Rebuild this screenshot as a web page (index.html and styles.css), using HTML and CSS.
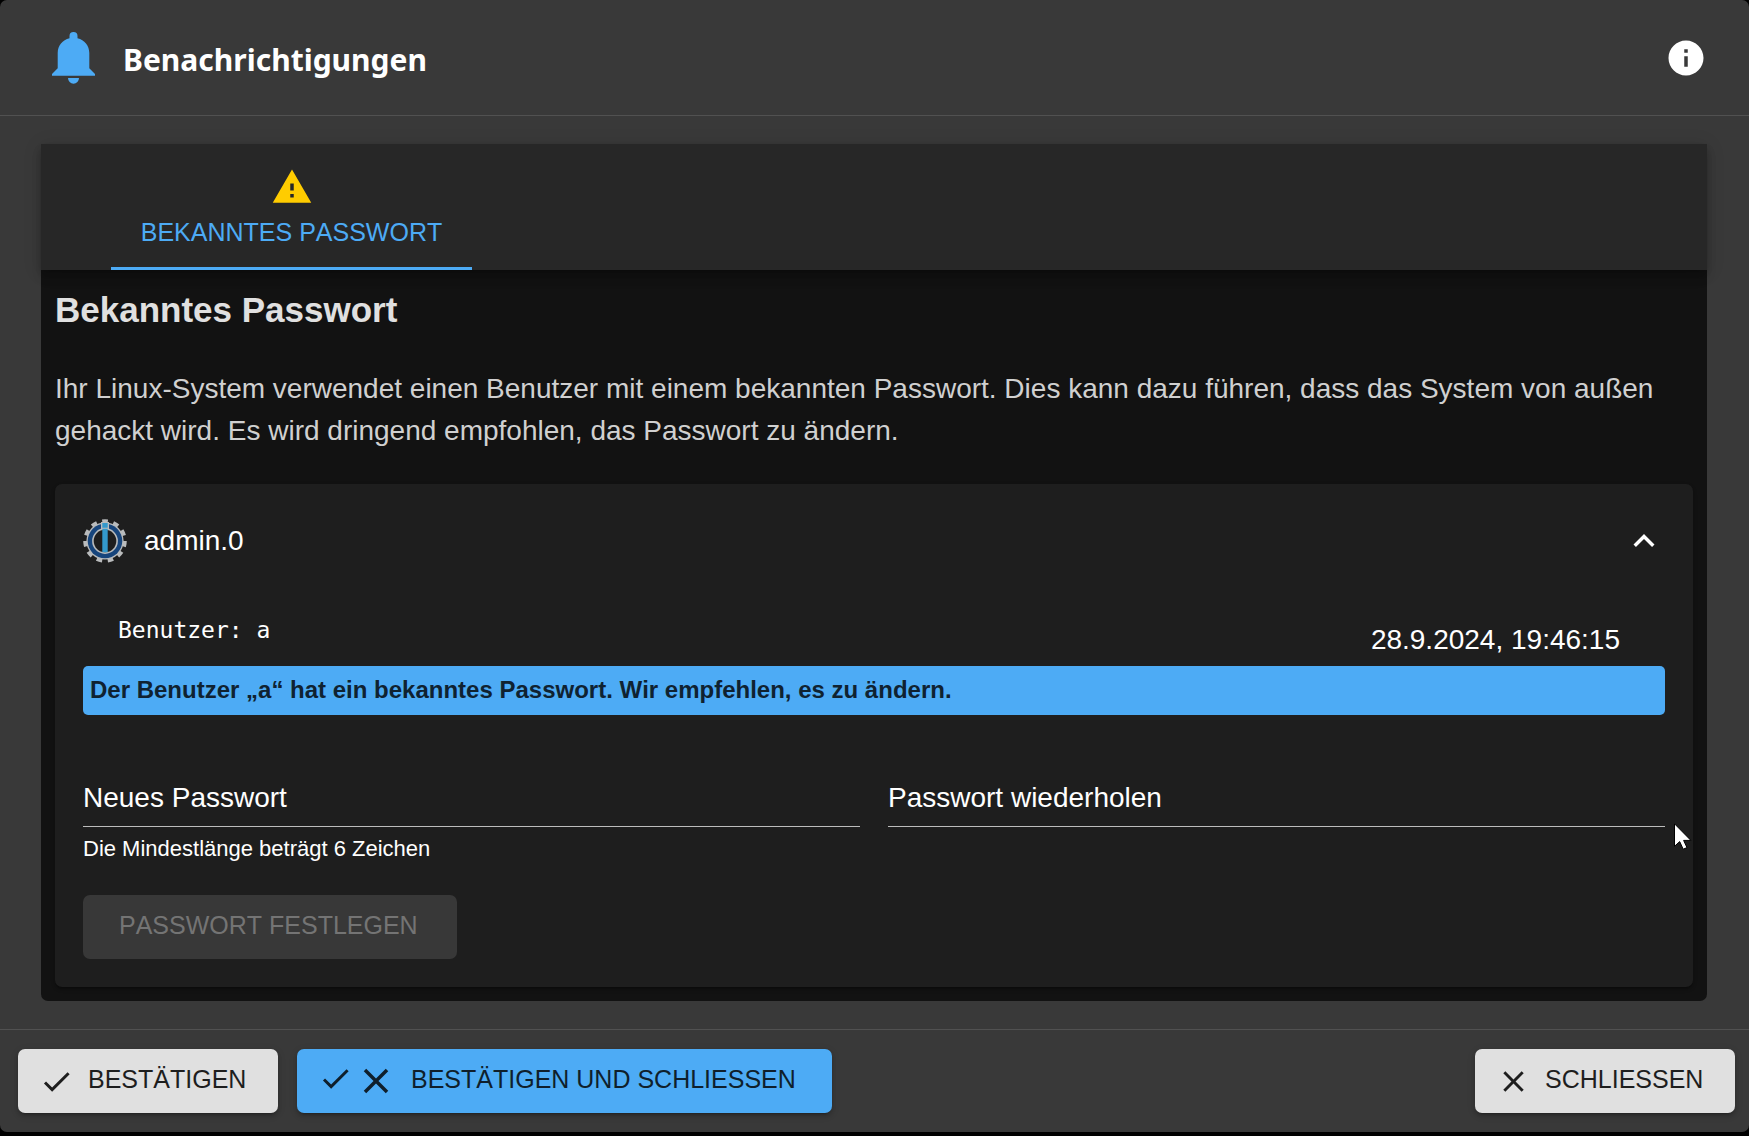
FILE: index.html
```html
<!DOCTYPE html>
<html lang="de">
<head>
<meta charset="utf-8">
<title>Benachrichtigungen</title>
<link rel="stylesheet" href="styles.css">
</head>
<body>
<div class="dialog" role="dialog" aria-labelledby="dialog-title">
  <header class="dialog-header">
    <svg class="bell" viewBox="0 0 43 52" aria-hidden="true"><path d="M21.5 0a4 4 0 0 0-4 4v2.300C10.500 8 5.700 13.500 5.700 21v15.300L0 42v1.700h43V42l-5.700-5.700V21c0-7.500-4.800-13-11.800-14.700V4a4 4 0 0 0-4-4zM16 46a5.500 5.700 0 0 0 11 0z"/></svg>
    <h1 class="dialog-title" id="dialog-title">Benachrichtigungen</h1>
    <button class="icon-button" type="button" aria-label="Information">
      <svg class="icon" viewBox="0 0 24 24"><path d="M12 2C6.480 2 2 6.480 2 12s4.480 10 10 10 10-4.480 10-10S17.520 2 12 2zm1 15h-2v-6h2v6zm0-8h-2V7h2v2z"/></svg>
    </button>
  </header>

  <main class="dialog-content">
    <section class="panel">
      <div class="tabs" role="tablist">
        <button class="tab" type="button" role="tab" aria-selected="true">
          <svg class="icon warning" viewBox="0 0 24 24" aria-hidden="true"><path d="M1 21h22L12 2 1 21zm12-3h-2v-2h2v2zm0-4h-2v-4h2v4z"/></svg>
          <span>BEKANNTES PASSWORT</span>
        </button>
      </div>
      <div class="panel-body">
        <h2 class="panel-title">Bekanntes Passwort</h2>
        <p class="description">Ihr Linux-System verwendet einen Benutzer mit einem bekannten Passwort. Dies kann dazu führen, dass das System von außen gehackt wird. Es wird dringend empfohlen, das Passwort zu ändern.</p>

        <article class="card">
          <button class="card-header" type="button" aria-expanded="true">
            <svg class="logo" viewBox="-22 -22 44 44" aria-hidden="true">
              <circle r="18.500" fill="none" stroke="#b9bbbc" stroke-width="6.500" stroke-dasharray="5 5" pathLength="110" transform="rotate(-98)"/>
              <circle r="18.600" fill="#b9bbbc"/>
              <circle r="17.300" fill="#17457c"/>
              <circle r="12.900" fill="#b9bbbc"/>
              <circle r="11.300" fill="#1e1e1e"/>
              <path d="M-4-19h8v7h-8z" fill="#b9bbbc"/>
              <path d="M-2.700-18h5.400v4.700h-5.400zM-2.700-12.300h5.400v23.500h-5.400z" fill="#3399cc"/>
            </svg>
            <span>admin.0</span>
            <svg class="icon chevron" viewBox="0 0 24 24" aria-hidden="true"><path d="M12 8l-6 6 1.410 1.410L12 10.830l4.590 4.580L18 14z"/></svg>
          </button>
          <div class="message">
            <span class="user">Benutzer: a</span>
            <time class="date" datetime="2024-09-28T19:46:15">28.9.2024, 19:46:15</time>
          </div>
          <p class="banner">Der Benutzer „a“ hat ein bekanntes Passwort. Wir empfehlen, es zu ändern.</p>
          <form class="password-form">
            <div class="fields">
              <div class="field">
                <label for="new-password">Neues Passwort</label>
                <input id="new-password" type="password" aria-describedby="password-hint">
                <small id="password-hint">Die Mindestlänge beträgt 6 Zeichen</small>
              </div>
              <div class="field">
                <label for="repeat-password">Passwort wiederholen</label>
                <input id="repeat-password" type="password">
              </div>
              <svg class="pointer" viewBox="0 0 18 27" aria-hidden="true"><path d="M.5.800v22.500l5.200-4.700 3.500 7.600 3.800-1.600-3.400-7.200h7.300z"/></svg>
            </div>
            <button class="button disabled" type="submit" disabled><span>PASSWORT FESTLEGEN</span></button>
          </form>
        </article>
      </div>
    </section>
  </main>

  <footer class="dialog-actions">
    <button class="button light" type="button">
      <svg class="action-icon" viewBox="0 0 24 24" aria-hidden="true"><path d="M9 16.170L4.830 12l-1.420 1.410L9 19 21 7l-1.410-1.410z"/></svg>
      <span>BESTÄTIGEN</span>
    </button>
    <button class="button primary" type="button">
      <svg class="action-icon small" viewBox="0 0 24 24" aria-hidden="true"><path d="M9 16.170L4.830 12l-1.420 1.410L9 19 21 7l-1.410-1.410z"/></svg>
      <svg class="action-icon large" viewBox="0 0 24 24" aria-hidden="true"><path d="M19 6.410L17.590 5 12 10.590 6.410 5 5 6.410 10.590 12 5 17.590 6.410 19 12 13.410 17.590 19 19 17.590 13.410 12z"/></svg>
      <span>BESTÄTIGEN UND SCHLIESSEN</span>
    </button>
    <button class="button light close" type="button">
      <svg class="action-icon" viewBox="0 0 24 24" aria-hidden="true"><path d="M19 6.410L17.590 5 12 10.590 6.410 5 5 6.410 10.590 12 5 17.590 6.410 19 12 13.410 17.590 19 19 17.590 13.410 12z"/></svg>
      <span>SCHLIESSEN</span>
    </button>
  </footer>
</div>
</body>
</html>
```

FILE: styles.css
```css
* { box-sizing: border-box; }

body {
  margin: 0;
  padding-bottom: 4px;
  background: #000;
  color: #fff;
  font: 28px/42px "Liberation Sans", Arial, sans-serif;
  font-kerning: none;
}

h1, h2, p { margin: 0; }

button {
  margin: 0;
  border: 0;
  background: none;
  color: inherit;
  font: inherit;
  font-kerning: none;
}

svg {
  display: block;
  flex: none;
  fill: currentColor;
}

.icon { width: 42px; height: 42px; }

.dialog {
  display: flex;
  flex-direction: column;
  min-height: calc(100vh - 4px);
  border-radius: 7px;
  background: #393939;
}

.dialog-header {
  display: flex;
  align-items: center;
  height: 116px;
  padding: 0 42px 0 52px;
  border-bottom: 1px solid #515151;
}

.bell {
  width: 43px;
  height: 52px;
  color: #4dabf5;
}

.dialog-title {
  margin-left: 28px;
  padding-top: 4px;
  font: bold 30px/44px "Noto Sans", "Open Sans", sans-serif;
}

.icon-button {
  margin-left: auto;
  padding: 0;
}

.dialog-content {
  display: flex;
  flex: 1;
  flex-direction: column;
  padding: 28px 42px 28px 41px;
}

.panel {
  flex: 1;
  border-radius: 0 0 7px 7px;
  background: #121212;
}

.tabs {
  display: flex;
  padding: 0 70px;
  background: #272727;
  box-shadow: 0 4px 7px -2px rgba(0, 0, 0, .2), 0 7px 9px rgba(0, 0, 0, .14), 0 2px 18px rgba(0, 0, 0, .12);
}

.tab {
  display: flex;
  flex-direction: column;
  align-items: center;
  width: 361px;
  height: 126px;
  padding: 22px 28px 0;
  border-bottom: 3px solid #4dabf5;
  color: #4dabf5;
  font-size: 25px;
  line-height: 32px;
  gap: 8px;
}

.warning { color: #fc0; }

.panel-body { padding: 14px; }

.panel-title {
  margin-top: 4px;
  color: #e0e0e0;
  font-size: 35px;
  line-height: 44px;
}

.description {
  margin-top: 36px;
  color: #d0d0d0;
}

.card {
  margin-top: 32px;
  padding: 28px;
  border-radius: 7px;
  background: #1e1e1e;
  box-shadow: 0 3px 2px -2px rgba(0, 0, 0, .2), 0 2px 2px rgba(0, 0, 0, .14), 0 2px 5px rgba(0, 0, 0, .12);
}

.card-header {
  display: flex;
  align-items: center;
  width: 100%;
  height: 58px;
  padding: 0;
}

.logo {
  width: 44px;
  height: 44px;
  margin-right: 17px;
}

.chevron { margin-left: auto; }

.message {
  display: flex;
  justify-content: space-between;
  margin-top: 46px;
  padding: 0 45px 0 35px;
}

.user {
  font: 23px/28px "DejaVu Sans Mono", monospace;
}

.date { padding-top: 3px; }

.banner {
  margin-top: 5px;
  padding: 2px 7px 4px;
  border-radius: 5px;
  background: #4dabf5;
  color: #0f2231;
  font-size: 24px;
  line-height: 43px;
  font-weight: bold;
}

.password-form { margin-top: 54px; }

.fields {
  position: relative;
  display: grid;
  grid-template-columns: 1fr 1fr;
  gap: 28px;
}

.field {
  display: grid;
  align-content: start;
}

.field label {
  grid-area: 1 / 1;
  align-self: center;
  pointer-events: none;
}

.field input {
  grid-area: 1 / 1;
  width: 100%;
  height: 58px;
  padding: 0;
  border: 0;
  border-bottom: 1px solid #bcbcbc;
  background: none;
  color: inherit;
  font: inherit;
  outline: 0;
}

.field small {
  margin-top: 4px;
  font-size: 22px;
  line-height: 35px;
}

.pointer {
  position: absolute;
  top: 54px;
  right: -27px;
  width: 18px;
  height: 27px;
  fill: #fff;
  stroke: #000;
}

.button {
  display: flex;
  align-items: center;
  height: 64px;
  padding: 0 28px 0 21px;
  border-radius: 7px;
  font-size: 25px;
  white-space: nowrap;
}

.button span { padding-bottom: 4px; }

.disabled {
  min-width: 374px;
  margin-top: 29px;
  padding: 0 36px;
  background: #383838;
  color: #747474;
}

.dialog-actions {
  display: flex;
  gap: 19px;
  padding: 19px 14px 19px 18px;
  border-top: 1px solid #515151;
}

.light, .primary {
  color: #1e1e1e;
  box-shadow: 0 3px 2px -2px rgba(0, 0, 0, .2), 0 3px 4px rgba(0, 0, 0, .14), 0 2px 8px rgba(0, 0, 0, .12);
}

.light {
  min-width: 260px;
  background: #e0e0e0;
}

.primary {
  min-width: 535px;
  background: #4dabf5;
  color: #0f1f2c;
}

.action-icon {
  width: 35px;
  height: 35px;
  margin-right: 14px;
}

.primary .small { margin: 0 2px 6px 0; }

.primary .large {
  width: 42px;
  height: 42px;
}

.close { margin-left: auto; }
```
